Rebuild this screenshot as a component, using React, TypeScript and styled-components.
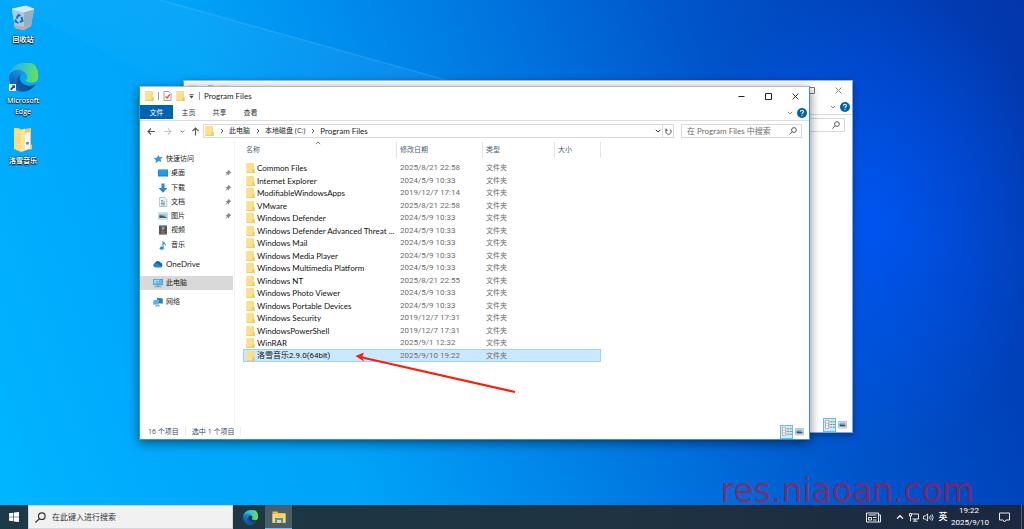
import React from 'react';
import styled, { createGlobalStyle, css } from 'styled-components';

const Global = createGlobalStyle`
  *, *::before, *::after { box-sizing: border-box; }
  body {
    margin: 0;
    font-family: "Open Sans", "Noto Sans CJK SC", sans-serif;
    font-size: 7px;
    line-height: 12px;
    color: #1a1a1a;
  }
  button, input { font: inherit; color: inherit; margin: 0; padding: 0; border: 0; background: none; border-radius: 0; }
  a { color: inherit; text-decoration: none; }
  ul { list-style: none; margin: 0; padding: 0; }
  svg { display: block; flex: none; }
`;

const latin = css`
  font-family: Lato, "Noto Sans CJK SC", sans-serif;
  font-size: 8px;
`;

const digits = css`
  font-family: Roboto, "Noto Sans CJK SC", sans-serif;
  font-size: 8px;
`;

const Screen = styled.div`
  display: flex;
  flex-direction: column;
  min-height: 100vh;
`;

const Desktop = styled.main`
  position: relative;
  flex: 1;
  background:
    radial-gradient(ellipse 18% 48% at 85% 44%, rgba(0, 88, 255, 0.75), rgba(0, 88, 255, 0) 100%),
    linear-gradient(70deg, #00b6ff 0%, #00a9fc 15%, #00a4f8 30%, #0092f0 40%, #0074de 56%, #0054ca 72%, #0040b8 88%, #0336aa 100%);
`;

const Beams = styled.svg`
  position: absolute;
  inset: 0;
  width: 100%;
  height: 100%;
`;

const Shortcuts = styled.ul`
  position: relative;
  display: flex;
  flex-direction: column;
  gap: 10px;
  width: 46px;
  padding-top: 5px;
`;

const Shortcut = styled.a`
  display: flex;
  flex-direction: column;
  align-items: center;
  gap: 3px;
  min-height: 48px;
  color: #fff;
  font-weight: 600;
  line-height: 11px;
  text-align: center;
  text-shadow: 0 1px 1px #000, 0 0 2px #000;
`;

const Frame = styled.section<{ $back?: boolean }>`
  position: absolute;
  display: flex;
  flex-direction: column;
  background: #fff;
  border: 1px solid ${(p) => (p.$back ? '#7fa9cc' : '#3d8fc7')};
  border-top-color: #a9b9c6;
  box-shadow: ${(p) => (p.$back ? '0 2px 7px rgba(0,0,0,.35)' : '0 3px 10px rgba(0,0,0,.5)')};
  ${(p) =>
    p.$back
      ? css`top: 80px; left: 183px; right: 171px; bottom: 72px;`
      : css`top: 86px; left: 139px; right: 214px; bottom: 65px;`}
`;

const TitleBar = styled.header<{ $back?: boolean }>`
  display: flex;
  align-items: center;
  height: 18px;
  padding-left: 5px;
  opacity: ${(p) => (p.$back ? 0.6 : 1)};
`;

const Title = styled.h1`
  ${latin}
  flex: 1;
  margin: 0;
  font-weight: 400;
  padding-left: 4px;
`;

const Divider = styled.span`
  width: 1px;
  height: 8px;
  background: #999;
`;

const QuickTools = styled.div`
  display: flex;
  align-items: center;
  gap: 4px;
  padding: 0 5px 0 4px;
`;

const WindowButton = styled.button`
  display: grid;
  place-items: center;
  width: 27px;
  height: 18px;
`;

const Ribbon = styled.nav`
  display: flex;
  align-items: center;
  height: 16px;
  border-bottom: 1px solid #dcdcdc;
  padding-right: 2px;
`;

const Tab = styled.button<{ $active?: boolean }>`
  width: ${(p) => (p.$active ? 33 : 31)}px;
  height: 14px;
  align-self: flex-start;
  line-height: 13px;
  color: ${(p) => (p.$active ? '#fff' : '#333')};
  background: ${(p) => (p.$active ? '#0063b1' : 'transparent')};
`;

const Spacer = styled.span`
  flex: 1;
`;

const HelpGroup = styled.div`
  display: flex;
  align-items: center;
  gap: 4px;
`;

const IconButton = styled.button`
  display: grid;
  place-items: center;
`;

const AddressRow = styled.div`
  display: flex;
  align-items: center;
  height: 20px;
  padding-right: 7px;
`;

const NavButtons = styled.div`
  display: grid;
  grid-template-columns: 17px 15px 14px 12px;
  justify-items: center;
  padding: 0 2px 0 3px;
`;

const AddressBox = styled.div`
  display: flex;
  align-items: center;
  flex: 1;
  height: 14px;
  border: 1px solid #d9d9d9;
  padding-left: 1px;
`;

const Crumbs = styled.ol`
  display: flex;
  align-items: center;
  flex: 1;
  list-style: none;
  margin: 0;
  padding: 0;
`;

const Crumb = styled.li`
  display: flex;
  align-items: center;
  white-space: nowrap;
`;

const CrumbLink = styled.a<{ $latin?: boolean }>`
  ${(p) => p.$latin && latin}
`;

const CrumbArrow = styled.span`
  display: grid;
  place-items: center;
  width: 15px;
`;

const Refresh = styled(IconButton)`
  width: 11px;
  height: 12px;
  border-left: 1px solid #d9d9d9;
  margin-left: 1px;
`;

const SearchBox = styled.label`
  display: flex;
  align-items: center;
  width: 121px;
  height: 14px;
  margin-left: 7px;
  padding: 0 4px 0 5px;
  border: 1px solid #d9d9d9;
`;

const SearchInput = styled.input`
  ${latin}
  flex: 1;
  min-width: 0;
  outline: none;
  &::placeholder { color: #6b6b6b; opacity: 1; }
`;

const Body = styled.div`
  display: flex;
  flex: 1;
  min-height: 0;
`;

const Sidebar = styled.nav`
  display: flex;
  flex-direction: column;
  gap: 5px;
  width: 95px;
  padding: 11px 1px 0 0;
  border-right: 1px solid #f3f3f3;
`;

const QuickList = styled.ul`
  display: grid;
  grid-auto-rows: 1fr;
  height: 100px;
`;

const SideItem = styled.a<{ $nested?: boolean; $selected?: boolean }>`
  display: flex;
  align-items: center;
  gap: 3px;
  height: 14px;
  padding-left: ${(p) => (p.$nested ? 18 : 13)}px;
  padding-right: 1px;
  background: ${(p) => (p.$selected ? '#d9d9d9' : 'transparent')};
`;

const SideLabel = styled.span<{ $latin?: boolean }>`
  flex: 1;
  ${(p) => p.$latin && latin}
`;

const Listing = styled.div`
  flex: 1;
  padding: 1px 0 0 8px;
`;

const Files = styled.table`
  border-collapse: separate;
  border-spacing: 0;
  table-layout: fixed;
  width: 358px;
`;

const HeadCell = styled.th<{ $w: number }>`
  position: relative;
  width: ${(p) => p.$w}px;
  height: 16px;
  padding: 0 0 0 3px;
  border-right: 1px solid #e3e3e3;
  color: #4c607a;
  font-weight: 400;
  text-align: left;
`;

const SortMark = styled.svg`
  position: absolute;
  top: -2px;
  left: 47%;
`;

const FileBody = styled.tbody`
  &::before { content: ""; display: table-row; height: 4px; }
`;

const FileRow = styled.tr<{ $selected?: boolean; $tall?: boolean }>`
  height: ${(p) => (p.$tall ? 13 : 12)}px;
  ${(p) =>
    p.$selected &&
    css`
      td { background: #cce8ff; box-shadow: inset 0 1px #99d1ff, inset 0 -1px #99d1ff; }
      td:first-child { box-shadow: inset 0 1px #99d1ff, inset 0 -1px #99d1ff, inset 1px 0 #99d1ff; }
      td:last-child { box-shadow: inset 0 1px #99d1ff, inset 0 -1px #99d1ff, inset -1px 0 #99d1ff; }
    `}
`;

const Cell = styled.td`
  padding: 0 0 0 3px;
  color: #6d6d6d;
  white-space: nowrap;
`;

const DateCell = styled(Cell)`
  ${digits}
`;

const NameCell = styled(Cell)<{ $latin: boolean }>`
  ${(p) => (p.$latin ? latin : digits)}
  color: #111;
`;

const FileName = styled.span`
  display: flex;
  align-items: center;
  gap: 2px;
`;

const StatusBar = styled.footer`
  display: flex;
  align-items: center;
  height: 15px;
  padding: 0 3px 0 8px;
  color: #33475f;
`;

const StatusText = styled.span`
  padding-right: 6px;
  margin-right: 6px;
  border-right: 1px solid #ececec;
  line-height: 9px;
`;

const ViewButton = styled.button<{ $active?: boolean }>`
  display: grid;
  place-items: center;
  width: 13px;
  height: 14px;
  border: 1px solid ${(p) => (p.$active ? '#5fc0e8' : 'transparent')};
  background: ${(p) => (p.$active ? '#cdebf7' : 'transparent')};
`;

const Annotation = styled.svg`
  position: absolute;
  left: 354px;
  top: 348px;
`;

const Watermark = styled.p`
  position: absolute;
  right: 50px;
  bottom: 0;
  margin: 0;
  font: 33px/28px "DejaVu Sans", sans-serif;
  color: rgba(196, 16, 48, 0.62);
`;

const Taskbar = styled.footer`
  display: flex;
  align-items: stretch;
  height: 24px;
  background: linear-gradient(90deg, #1d3a46, #1f3342 60%, #1b2840);
  color: #fff;
`;

const TaskButton = styled.button<{ $w: number; $active?: boolean }>`
  display: grid;
  place-items: center;
  width: ${(p) => p.$w}px;
  ${(p) => p.$active && css`background: #4a5f6a; border-bottom: 1px solid #76b9ed;`}
`;

const TaskSearch = styled.label`
  display: flex;
  align-items: center;
  gap: 6px;
  width: 205px;
  padding-left: 6px;
  background: #f1f1f1;
  border: 1px solid #d5d8da;
  margin-right: 3px;
`;

const TaskInput = styled.input`
  flex: 1;
  min-width: 0;
  font-size: 8px;
  outline: none;
  &::placeholder { color: #333; opacity: 1; }
`;

const Tray = styled.div`
  display: flex;
  align-items: center;
  margin-left: auto;
`;

const Ime = styled.button`
  width: 16px;
  font-size: 9px;
  font-weight: 500;
`;

const Clock = styled.time`
  ${digits}
  width: 36px;
  line-height: 12px;
  text-align: center;
`;

const ShowDesktop = styled.button`
  width: 3px;
  height: 24px;
  border-left: 1px solid #566273;
`;

const FolderIcon = ({ w = 9, h = 10 }: { w?: number; h?: number }) => (
  <svg width={w} height={h} viewBox="0 0 9 10">
    <path d="M.5 0h6.700l.8 1v9H.5z" fill="#f9da7c" />
    <path d="M.5 0h5.700v10H.5z" fill="#fce08c" />
    <path d="M6.600 6 8.700 6.500V10H6.600z" fill="#efc75b" />
    <path d="M.5 9.300h8.200v.7H.5z" fill="#ecc766" />
  </svg>
);

const Chevron = ({ dir = 'down', color = '#555', size = 6 }: { dir?: 'down' | 'up' | 'right'; color?: string; size?: number }) => (
  <svg width={size} height={size} viewBox="0 0 6 6" fill="none" stroke={color}>
    <path d={dir === 'down' ? 'M.8 1.8 3 4 5.2 1.8' : dir === 'up' ? 'M.8 4.2 3 2l2.2 2.2' : 'M2 1l2 2-2 2'} />
  </svg>
);

const Arrow = ({ dir, color = '#555' }: { dir: 'left' | 'right' | 'up'; color?: string }) => (
  <svg width="9" height="9" viewBox="0 0 9 9" fill="none" stroke={color} strokeWidth="1.1">
    <path d={dir === 'left' ? 'M8 4.5H1M4 1.5l-3 3 3 3' : dir === 'right' ? 'M1 4.5H8M5 1.5l3 3-3 3' : 'M4.5 8.5V1M1.5 4l3-3 3 3'} />
  </svg>
);

const Magnifier = ({ size = 8, color = '#444' }: { size?: number; color?: string }) => (
  <svg width={size} height={size} viewBox="0 0 10 10" fill="none" stroke={color} strokeWidth="1.1">
    <circle cx="6.2" cy="3.8" r="3" />
    <path d="M4 6 .5 9.5" />
  </svg>
);

const Pin = () => (
  <svg width="8" height="8" viewBox="0 0 8 8">
    <path d="M4.5.8 7.2 3.5l-.8.2-1.2 1.4-.2 1.5L3.600 5.200 1 7.400 2.900 4.500 1.500 3.100 3 2.900l1.300-1.200z" fill="#7f8b96" />
  </svg>
);

type SideKind = 'star' | 'desktop' | 'down' | 'doc' | 'pic' | 'video' | 'music' | 'cloud' | 'pc' | 'net';

const sideArt: Record<SideKind, React.ReactNode> = {
  star: <path d="M5.500 1 6.700 3.200 9.600 3 7.600 5.200 8.300 8 5.700 6.900 2.500 9.300 3 6 .5 4.200 4 3.600z" fill="#2f97dc" />,
  desktop: (
    <>
      <path d="M0 1.500h10v7H0z" fill="#0f7fd8" />
      <path d="M.5 2h9v5.500h-9z" fill="#1e9df0" />
    </>
  ),
  down: <path d="M3.500.5h3v4.500H9.500L5 9.800.5 5h3z" fill="#2f86d6" />,
  doc: (
    <>
      <path d="M1.500.5h5.500l1.800 1.800v7.200H1.500z" fill="#eef2f5" stroke="#9aa5ad" strokeWidth=".6" />
      <path d="M3 3.500h2M3 5h4M3 6.500h4M3 8h4" stroke="#4d8fc4" strokeWidth=".8" />
    </>
  ),
  pic: (
    <>
      <path d="M.4 1.800h9.200v6.400H.4z" fill="#f5f7f8" stroke="#a5acb2" strokeWidth=".6" />
      <path d="M1.300 2.700h7.400v3H1.300z" fill="#8cc5ea" />
      <path d="M1.300 4.300l3 .2 4.400 1.800v.8H1.300z" fill="#34617a" />
    </>
  ),
  video: (
    <>
      <path d="M1 .5h8v9H1z" fill="#3c3c45" />
      <path d="M2.700 1h4.600v3.700H2.700z" fill="#4c78b4" />
      <path d="M2.700 5.300h4.600V9H2.700z" fill="#7d6a50" />
      <path d="M4 2.500h2v2H4z" fill="#d9a25a" />
      <path d="M1.800 1v8M8.200 1v8" stroke="#ddd" strokeWidth=".5" strokeDasharray=".8 1" />
    </>
  ),
  music: (
    <>
      <path d="M4.500.3c.3 2 3.800 2.300 3.400 6-.6-1.600-1.500-2.300-2.300-2.500v4.400H4.500z" fill="#1e8fe0" />
      <ellipse cx="3.700" cy="8.200" rx="2" ry="1.600" fill="#1e8fe0" />
    </>
  ),
  cloud: (
    <>
      <path d="M2.300 8.300A2.300 2.300 0 0 1 2 3.900 3 3 0 0 1 7.400 3.600 2.500 2.500 0 0 1 8 8.300z" fill="#0a64bd" />
      <path d="M2.300 8.300A2 2 0 0 1 1 5l3-.8 5 3.300-.8.8z" fill="#1d86dc" />
    </>
  ),
  pc: (
    <>
      <path d="M.2 1h9.600v6.200H.2z" fill="#4a8fbf" />
      <path d="M.9 1.700h8.200v4.800H.9z" fill="#5dbdf2" />
      <path d="M.9 1.700h6L.9 6z" fill="#8fd8fa" />
      <path d="M4 7.200h2v1.100H4zM1.500 8.300h7v.9h-7z" fill="#8c9aa5" />
    </>
  ),
  net: (
    <>
      <path d="M4 .8l5.700.8v5.200L4 6z" fill="#2a7fb8" />
      <path d="M.3 3.300 6 2.500v5L.3 7.800z" fill="#58b6ea" />
      <path d="M2 8.500l4.500-.3.5 1-4.500.4z" fill="#70889a" />
    </>
  ),
};

const SideIcon = ({ kind }: { kind: SideKind }) => (
  <svg width="10" height="10" viewBox="0 0 10 10">{sideArt[kind]}</svg>
);

const EdgeIcon = ({ size, id }: { size: number; id: string }) => (
  <svg width={size} height={size} viewBox="0 0 256 256">
    <defs>
      <linearGradient id={id + 'a'} x1="63" y1="177" x2="242" y2="177" gradientUnits="userSpaceOnUse">
        <stop offset="0" stopColor="#0c59a4" />
        <stop offset="1" stopColor="#114a8b" />
      </linearGradient>
      <linearGradient id={id + 'b'} x1="157" y1="100" x2="46" y2="222" gradientUnits="userSpaceOnUse">
        <stop offset="0" stopColor="#1b9de2" />
        <stop offset=".6" stopColor="#0f75c9" />
        <stop offset="1" stopColor="#0b5bb0" />
      </linearGradient>
      <linearGradient id={id + 'c'} x1="10" y1="80" x2="250" y2="120" gradientUnits="userSpaceOnUse">
        <stop offset="0" stopColor="#2cb1e2" />
        <stop offset=".45" stopColor="#33c6c8" />
        <stop offset="1" stopColor="#6fe04f" />
      </linearGradient>
    </defs>
    <path d="M231 190a94 94 0 0 1-11 5 102 102 0 0 1-36 6c-47 0-89-33-89-75a32 32 0 0 1 17-28c-43 2-54 46-54 72 0 74 68 81 82 81 8 0 20-2 27-5l1-1a128 128 0 0 0 67-53c2-2-1-4-4-2z" fill={`url(#${id}a)`} />
    <path d="M106 241a79 79 0 0 1-23-21 81 81 0 0 1 29-122c3-2 9-4 16-4a32 32 0 0 1 26 13 32 32 0 0 1 6 18c0-1 25-80-80-80C36 45 0 87 0 124a130 130 0 0 0 12 57 128 128 0 0 0 156 67 75 75 0 0 1-62-7z" fill={`url(#${id}b)`} />
    <path d="M152 149c-1 1-3 2-3 6 0 2 2 5 5 8 18 12 51 10 51 10a74 74 0 0 0 38-11 76 76 0 0 0 13-66c0-27-10-45-14-53C221-7 185 0 128 0A128 128 0 0 0 0 126c1-37 37-66 80-66 4 0 24 0 42 10 16 8 25 19 31 29 6 11 7 25 7 31 0 5-2 13-8 19z" fill={`url(#${id}c)`} />
  </svg>
);

const EdgeShortcutIcon = () => (
  <svg width="30" height="29" viewBox="0 0 30 29">
    <svg x="1" y="0" width="29" height="29" viewBox="0 0 29 29"><EdgeIcon size={29} id="d" /></svg>
    <path d="M1 21h7v7H1z" fill="#f4f4f4" />
    <path d="M2.500 27v-1.500l2.300-2.300-1-1H7v3.300l-1-1-2.300 2.500z" fill="#1f3f78" />
  </svg>
);

const RecycleIcon = () => (
  <svg width="24" height="26" viewBox="0 0 24 26">
    <path d="M1 4 15 1l8 3-3 17-7 4-9-2z" fill="#b5d3e6" />
    <path d="M1 4l12 3v18l-9-2z" fill="#a3cdea" />
    <path d="M13 7l10-3-3 17-7 4z" fill="#93afc2" />
    <path d="M1 4 15 1l8 3-10 3z" fill="#d9e6ee" stroke="#eef5f9" strokeWidth=".6" />
    <path d="M4 20l9 2 7-3-.4 2.200L13 25l-9-2z" fill="#c9a99b" />
    <path d="M5.500 13.500 7.500 10l2 1M10.500 12l1 4-2.500 1M7.500 18l-3-1.500.3-2" fill="none" stroke="#1769b8" strokeWidth="1.900" />
  </svg>
);

const DesktopFolderIcon = () => (
  <svg width="20" height="25" viewBox="0 0 20 25">
    <path d="M1 1h5l2 1.500L18 1v20l-8 3.500z" fill="#edc864" />
    <path d="M12 6l5-1v17l-5 1z" fill="#f4f7f9" />
    <path d="M13 15h3v2.500h-3z" fill="#5c9ac8" />
    <path d="M1 1l7 2.500V25L1 22z" fill="#f9dc85" />
    <path d="M8 3.500 12 1.500v22L8 25z" fill="#fbe59f" />
    <path d="M17 17l2 1v4l-2 1z" fill="#f0cc6a" />
  </svg>
);

const DetailsIcon = () => (
  <svg width="10" height="9" viewBox="0 0 10 9">
    <path d="M.5.5h3v8h-3zM.5 3.200h3M.5 5.900h3" fill="#fff" stroke="#b79a95" strokeWidth=".7" />
    <path d="M4.500 1.800H7M7.500 1.800H10M4.500 4.500H7M7.500 4.500H10M4.500 7.200H7M7.500 7.200H10" stroke="#6b8593" strokeWidth=".8" />
  </svg>
);

const ThumbIcon = () => (
  <svg width="9" height="8" viewBox="0 0 9 8">
    <path d="M.5.5h8v6.500h-8z" fill="#f2f2f2" stroke="#b3b3b3" strokeWidth=".8" />
    <path d="M1.500 1.500h6v2h-6z" fill="#7cb5e4" />
    <path d="M1.500 3.200l6 .6v1.700h-6z" fill="#28577d" />
  </svg>
);

const HelpIcon = () => (
  <svg width="10" height="10" viewBox="0 0 10 10">
    <circle cx="5" cy="5" r="5" fill="#0063b1" />
    <path d="M3.500 3.800c0-2 3-2 3-.2 0 1-1.500 1.200-1.500 2.200M5 6.800v1" fill="none" stroke="#fff" strokeWidth="1.100" />
  </svg>
);

const WindowChrome = ({ title, back, query, path = [] }: { title: string; back?: boolean; query: string; path?: string[] }) => (
  <>
    <TitleBar $back={back}>
      <FolderIcon />
      <QuickTools>
        <Divider />
        <svg width="9" height="10" viewBox="0 0 9 10">
          <path d="M1 .5h5L8 2.500v7H1z" fill="#fff" stroke="#8a8a8a" strokeWidth=".8" />
          <path d="M2.500 5.500 4 7l2.800-3.500" fill="none" stroke="#e0562b" strokeWidth="1.300" />
        </svg>
        <FolderIcon />
        <svg width="5" height="5" viewBox="0 0 5 5"><path d="M.5 0h4v.8h-4zM.3 1.800h4.400L2.500 4.500z" fill="#444" /></svg>
      </QuickTools>
      <Divider />
      <Title>{title}</Title>
      <WindowButton aria-label="最小化"><svg width="7" height="7" viewBox="0 0 7 7"><path d="M.5 3.500h6" stroke="#222" /></svg></WindowButton>
      <WindowButton aria-label="最大化"><svg width="7" height="7" viewBox="0 0 7 7"><path d="M.5.5h6v6h-6z" fill="none" stroke="#222" /></svg></WindowButton>
      <WindowButton aria-label="关闭"><svg width="7" height="7" viewBox="0 0 7 7"><path d="M.5.5l6 6M6.500.5l-6 6" stroke="#222" strokeWidth=".9" /></svg></WindowButton>
    </TitleBar>
    <Ribbon>
      {!back && (
        <>
          <Tab $active>文件</Tab>
          <Tab>主页</Tab>
          <Tab>共享</Tab>
          <Tab>查看</Tab>
        </>
      )}
      <Spacer />
      <HelpGroup>
        <IconButton aria-label="展开功能区"><Chevron color="#8a8a8a" /></IconButton>
        <IconButton aria-label="帮助"><HelpIcon /></IconButton>
      </HelpGroup>
    </Ribbon>
    <AddressRow>
      <NavButtons>
        <IconButton aria-label="后退"><Arrow dir="left" /></IconButton>
        <IconButton aria-label="前进"><Arrow dir="right" color="#c8c8c8" /></IconButton>
        <IconButton aria-label="最近位置"><Chevron size={5} /></IconButton>
        <IconButton aria-label="上移"><Arrow dir="up" /></IconButton>
      </NavButtons>
      <AddressBox>
        <FolderIcon />
        <Crumbs>
          {path.map((name) => (
            <Crumb key={name}>
              <CrumbArrow><Chevron dir="right" /></CrumbArrow>
              <CrumbLink href="#" $latin={/^[A-Z]/.test(name)}>{name}</CrumbLink>
            </Crumb>
          ))}
        </Crumbs>
        <IconButton aria-label="历史位置"><Chevron color="#333" /></IconButton>
        <Refresh aria-label="刷新">
          <svg width="7" height="7" viewBox="0 0 7 7" fill="none" stroke="#444" strokeWidth=".9">
            <path d="M4.800 1.200A2.700 2.700 0 1 1 2 1.300M1 .5v1.800h1.800" />
          </svg>
        </Refresh>
      </AddressBox>
      <SearchBox>
        <SearchInput type="text" placeholder={query} aria-label="搜索" />
        <Magnifier />
      </SearchBox>
    </AddressRow>
  </>
);

const Status = ({ texts = [] }: { texts?: string[] }) => (
  <StatusBar>
    {texts.map((t) => <StatusText key={t}>{t}</StatusText>)}
    <Spacer />
    <ViewButton $active aria-label="详细信息"><DetailsIcon /></ViewButton>
    <ViewButton aria-label="大图标"><ThumbIcon /></ViewButton>
  </StatusBar>
);

const files: [string, string][] = [
  ['Common Files', '2025/8/21 22:58'],
  ['Internet Explorer', '2024/5/9 10:33'],
  ['ModifiableWindowsApps', '2019/12/7 17:14'],
  ['VMware', '2025/8/21 22:58'],
  ['Windows Defender', '2024/5/9 10:33'],
  ['Windows Defender Advanced Threat ...', '2024/5/9 10:33'],
  ['Windows Mail', '2024/5/9 10:33'],
  ['Windows Media Player', '2024/5/9 10:33'],
  ['Windows Multimedia Platform', '2024/5/9 10:33'],
  ['Windows NT', '2025/8/21 22:55'],
  ['Windows Photo Viewer', '2024/5/9 10:33'],
  ['Windows Portable Devices', '2024/5/9 10:33'],
  ['Windows Security', '2019/12/7 17:31'],
  ['WindowsPowerShell', '2019/12/7 17:31'],
  ['WinRAR', '2025/9/1 12:32'],
  ['洛雪音乐2.9.0(64bit)', '2025/9/10 19:22'],
];

const quick: { kind: SideKind; label: string; pinned?: boolean }[] = [
  { kind: 'desktop', label: '桌面', pinned: true },
  { kind: 'down', label: '下载', pinned: true },
  { kind: 'doc', label: '文档', pinned: true },
  { kind: 'pic', label: '图片', pinned: true },
  { kind: 'video', label: '视频' },
  { kind: 'music', label: '音乐' },
];

export default function App() {
  return (
    <Screen>
      <Global />
      <Desktop>
        <Beams viewBox="0 0 1024 505" preserveAspectRatio="none">
          <defs>
            <linearGradient id="beam" gradientUnits="userSpaceOnUse" x1="300" y1="40" x2="270" y2="150">
              <stop offset="0" stopColor="#6cc4ff" stopOpacity=".1" />
              <stop offset="1" stopColor="#6cc4ff" stopOpacity="0" />
            </linearGradient>
          </defs>
          <path d="M160 0 460 84 700 150 400 200 0 0z" fill="url(#beam)" />
          <path d="M160 0 460 84" stroke="#8fd0ff" strokeOpacity=".18" strokeWidth="1.500" />
        </Beams>
        <Shortcuts>
          <li><Shortcut href="#"><RecycleIcon />回收站</Shortcut></li>
          <li><Shortcut href="#"><EdgeShortcutIcon />Microsoft<br />Edge</Shortcut></li>
          <li><Shortcut href="#"><DesktopFolderIcon />洛雪音乐</Shortcut></li>
        </Shortcuts>

        <Frame $back aria-label="本地磁盘 (C:)">
          <WindowChrome back title="本地磁盘 (C:)" query="" />
          <Body />
          <Status />
        </Frame>

        <Frame aria-label="Program Files">
          <WindowChrome
            title="Program Files"
            query="在 Program Files 中搜索"
            path={['此电脑', '本地磁盘 (C:)', 'Program Files']}
          />
          <Body>
            <Sidebar>
              <QuickList>
                <li><SideItem href="#"><SideIcon kind="star" /><SideLabel>快速访问</SideLabel></SideItem></li>
                {quick.map((q) => (
                  <li key={q.label}>
                    <SideItem href="#" $nested>
                      <SideIcon kind={q.kind} />
                      <SideLabel>{q.label}</SideLabel>
                      {q.pinned && <Pin />}
                    </SideItem>
                  </li>
                ))}
              </QuickList>
              <SideItem href="#"><SideIcon kind="cloud" /><SideLabel $latin>OneDrive</SideLabel></SideItem>
              <SideItem href="#" $selected><SideIcon kind="pc" /><SideLabel>此电脑</SideLabel></SideItem>
              <SideItem href="#"><SideIcon kind="net" /><SideLabel>网络</SideLabel></SideItem>
            </Sidebar>
            <Listing>
              <Files>
                <thead>
                  <tr>
                    <HeadCell $w={154}>
                      名称
                      <SortMark width="6" height="6" viewBox="0 0 6 6" fill="none" stroke="#777"><path d="M.8 4 3 2l2.200 2" /></SortMark>
                    </HeadCell>
                    <HeadCell $w={86}>修改日期</HeadCell>
                    <HeadCell $w={72}>类型</HeadCell>
                    <HeadCell $w={46}>大小</HeadCell>
                  </tr>
                </thead>
                <FileBody>
                  {files.map(([name, date], i) => (
                    <FileRow key={name} $tall={i % 2 === 1} $selected={i === files.length - 1}>
                      <NameCell $latin={/^[A-Z]/.test(name)}><FileName><FolderIcon />{name}</FileName></NameCell>
                      <DateCell>{date}</DateCell>
                      <Cell>文件夹</Cell>
                      <Cell />
                    </FileRow>
                  ))}
                </FileBody>
              </Files>
            </Listing>
          </Body>
          <Status texts={['16 个项目', '选中 1 个项目']} />
        </Frame>

        <Annotation width="164" height="48" viewBox="0 0 164 48">
          <path d="M6 9 161 44" stroke="#ff1a0a" strokeWidth="2.200" />
          <path d="M1.500 8 10 4.500 8 9.300 10 13.500z" fill="#ff1a0a" />
        </Annotation>
        <Watermark>res.niaoan.com</Watermark>
      </Desktop>

      <Taskbar>
        <TaskButton $w={28} aria-label="开始">
          <svg width="10" height="10" viewBox="0 0 10 10">
            <path d="M0 1.300 4.400.7v4H0zM5 .6 10 0v4.700H5zM0 5.300h4.400v4L0 8.700zM5 5.300h5V10l-5-.6z" fill="#fff" />
          </svg>
        </TaskButton>
        <TaskSearch>
          <Magnifier size={11} color="#333" />
          <TaskInput type="text" placeholder="在此键入进行搜索" aria-label="在此键入进行搜索" />
        </TaskSearch>
        <TaskButton $w={29} aria-label="Microsoft Edge"><EdgeIcon size={15} id="t" /></TaskButton>
        <TaskButton $w={27} $active aria-label="文件资源管理器">
          <svg width="14" height="12" viewBox="0 0 14 12">
            <path d="M.5.5h5l1 1.500h7v10H.5z" fill="#f0b93a" />
            <path d="M.5 3h13v8.500H.5z" fill="#fcd66a" />
            <path d="M3 7h8v4.800H9V9H5v2.800H3z" fill="#3d93d8" />
          </svg>
        </TaskButton>
        <Tray>
          <TaskButton $w={38} aria-label="资讯">
            <svg width="15" height="11" viewBox="0 0 15 11" fill="none" stroke="#fff" strokeWidth=".9">
              <path d="M.5 1h12v9H.5zM12.500 3h2v7h-2M2.500 3h8M2.500 5.500h3v2.500h-3zM7 5.500h3.500M7 8h3.500" />
            </svg>
          </TaskButton>
          <TaskButton $w={15} aria-label="显示隐藏的图标"><Chevron dir="up" color="#fff" size={8} /></TaskButton>
          <TaskButton $w={14} aria-label="网络">
            <svg width="10" height="9" viewBox="0 0 10 9" fill="none" stroke="#fff" strokeWidth=".9">
              <path d="M3 1h6.500v5H3.500M6 6v2M4 8.200h4.500M.5.500h2v2.500h-2zM1.500 3v5.200" />
            </svg>
          </TaskButton>
          <TaskButton $w={14} aria-label="音量">
            <svg width="11" height="9" viewBox="0 0 11 9" fill="none" stroke="#fff" strokeWidth=".8">
              <path d="M.5 3h1.700L4.500 1v7L2.200 6H.5zM6 3.200q.8 1.300 0 2.600M7.500 2.200q1.600 2.300 0 4.600M9 1.200q2.400 3.300 0 6.600" />
            </svg>
          </TaskButton>
          <Ime>英</Ime>
          <Clock>19:22<br />2025/9/10</Clock>
          <TaskButton $w={34} aria-label="通知">
            <svg width="11" height="11" viewBox="0 0 11 11" fill="none" stroke="#fff" strokeWidth=".9">
              <path d="M.5 1h10v7H7L5.500 10 4 8H.5z" />
            </svg>
          </TaskButton>
          <ShowDesktop aria-label="显示桌面" />
        </Tray>
      </Taskbar>
    </Screen>
  );
}
